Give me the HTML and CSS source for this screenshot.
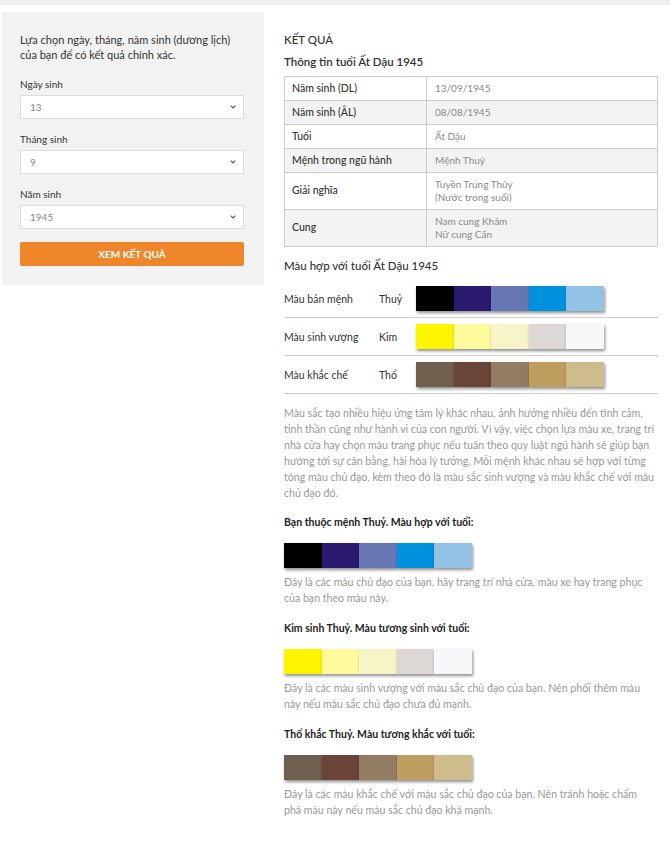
FILE: index.html
```html
<!DOCTYPE html>
<html lang="vi">
<head>
<meta charset="utf-8">
<title>Màu hợp tuổi</title>
<link rel="stylesheet" href="styles.css">
</head>
<body>
<div class="topbar"></div>
<div class="page">
  <aside class="sidebar">
    <p class="intro">Lựa chọn ngày, tháng, năm sinh (dương lịch) của bạn để có kết quả chính xác.</p>
    <div class="field">
      <label class="field-label">Ngày sinh</label>
      <div class="select"><span>13</span><svg class="chev" viewBox="0 0 6 4" width="6" height="4"><path d="M0.7 0.7l2.3 2.3 2.3-2.3" fill="none" stroke="#555" stroke-width="1.1"/></svg></div>
    </div>
    <div class="field">
      <label class="field-label">Tháng sinh</label>
      <div class="select"><span>9</span><svg class="chev" viewBox="0 0 6 4" width="6" height="4"><path d="M0.7 0.7l2.3 2.3 2.3-2.3" fill="none" stroke="#555" stroke-width="1.1"/></svg></div>
    </div>
    <div class="field">
      <label class="field-label">Năm sinh</label>
      <div class="select"><span>1945</span><svg class="chev" viewBox="0 0 6 4" width="6" height="4"><path d="M0.7 0.7l2.3 2.3 2.3-2.3" fill="none" stroke="#555" stroke-width="1.1"/></svg></div>
    </div>
    <button class="btn">XEM KẾT QUẢ</button>
  </aside>
  <main class="main">
    <h1 class="title">KẾT QUẢ</h1>
    <h2 class="subtitle">Thông tin tuổi Ất Dậu 1945</h2>
    <table class="info">
      <tr><td class="k">Năm sinh (DL)</td><td class="v">13/09/1945</td></tr>
      <tr class="alt"><td class="k">Năm sinh (ÂL)</td><td class="v">08/08/1945</td></tr>
      <tr><td class="k">Tuổi</td><td class="v">Ất Dậu</td></tr>
      <tr class="alt"><td class="k">Mệnh trong ngũ hành</td><td class="v">Mệnh Thuỷ</td></tr>
      <tr class="tall"><td class="k">Giải nghĩa</td><td class="v">Tuyền Trung Thủy<br>(Nước trong suối)</td></tr>
      <tr class="alt tall"><td class="k">Cung</td><td class="v">Nam cung Khảm<br>Nữ cung Cấn</td></tr>
    </table>
    <h2 class="subtitle sec">Màu hợp với tuổi Ất Dậu 1945</h2>
    <div class="crow">
      <span class="clabel">Màu bản mệnh</span><span class="celem">Thuỷ</span>
      <div class="strip"><i style="background:#000000"></i><i style="background:#2b1a6f"></i><i style="background:#6677b3"></i><i style="background:#0091df"></i><i style="background:#92c3e7"></i></div>
    </div>
    <div class="crow">
      <span class="clabel">Màu sinh vượng</span><span class="celem">Kim</span>
      <div class="strip"><i style="background:#fff500"></i><i style="background:#fffa9c"></i><i style="background:#f6f5c8"></i><i style="background:#ddd8d5"></i><i style="background:#f8f8fa"></i></div>
    </div>
    <div class="crow">
      <span class="clabel">Màu khắc chế</span><span class="celem">Thổ</span>
      <div class="strip"><i style="background:#6e5f4e"></i><i style="background:#6a4439"></i><i style="background:#937d62"></i><i style="background:#bf9d5e"></i><i style="background:#cfbc8d"></i></div>
    </div>
    <p class="para">Màu sắc tạo nhiều hiệu ứng tâm lý khác nhau, ảnh hưởng nhiều đến tình cảm, tinh thần cũng như hành vi của con người. Vì vậy, việc chọn lựa màu xe, trang trí nhà cửa hay chọn màu trang phục nếu tuân theo quy luật ngũ hành sẽ giúp bạn hướng tới sự cân bằng, hài hòa lý tưởng. Mỗi mệnh khác nhau sẽ hợp với từng tông màu chủ đạo, kèm theo đó là màu sắc sinh vượng và màu khắc chế với màu chủ đạo đó.</p>

    <h3 class="h3">Bạn thuộc mệnh Thuỷ. Màu hợp với tuổi:</h3>
    <div class="strip block"><i style="background:#000000"></i><i style="background:#2b1a6f"></i><i style="background:#6677b3"></i><i style="background:#0091df"></i><i style="background:#92c3e7"></i></div>
    <p class="note">Đây là các màu chủ đạo của bạn, hãy trang trí nhà cửa, màu xe hay trang phục của bạn theo màu này.</p>

    <h3 class="h3">Kim sinh Thuỷ. Màu tương sinh với tuổi:</h3>
    <div class="strip block"><i style="background:#fff500"></i><i style="background:#fffa9c"></i><i style="background:#f6f5c8"></i><i style="background:#ddd8d5"></i><i style="background:#f8f8fa"></i></div>
    <p class="note">Đây là các màu sinh vượng với màu sắc chủ đạo của bạn. Nên phối thêm màu này nếu màu sắc chủ đạo chưa đủ mạnh.</p>

    <h3 class="h3">Thổ khắc Thuỷ. Màu tương khắc với tuổi:</h3>
    <div class="strip block"><i style="background:#6e5f4e"></i><i style="background:#6a4439"></i><i style="background:#937d62"></i><i style="background:#bf9d5e"></i><i style="background:#cfbc8d"></i></div>
    <p class="note">Đây là các màu khắc chế với màu sắc chủ đạo của bạn. Nên tránh hoặc chấm phá màu này nếu màu sắc chủ đạo khá mạnh.</p>
  </main>
</div>
</body>
</html>
```

FILE: styles.css
```css
* { box-sizing: border-box; }
html, body { margin: 0; padding: 0; background: #fff; }
body {
  font-family: "Lato", "Noto Sans", sans-serif;
  color: #333;
  font-size: 11px;
}
.topbar { height: 5px; background: #f0f0f0; }
.page {
  display: flex;
  align-items: flex-start;
  gap: 20px;
  padding: 7px 12px 0 2px;
}
.sidebar {
  flex: none;
  width: 262px;
  background: #f2f2f2;
  padding: 20px 20px 19px 18px;
}
.intro {
  margin: 0 0 15px;
  font-size: 11px;
  line-height: 15px;
  color: #333;
}
.field { margin-bottom: 13px; }
.field-label {
  display: block;
  font-size: 10px;
  line-height: 14px;
  color: #333;
  margin-bottom: 4px;
}
.select {
  height: 24px;
  background: #fff;
  border: 1px solid #dcdcdc;
  display: flex;
  align-items: center;
  justify-content: space-between;
  padding: 0 7px 0 9px;
  color: #888;
  font-size: 10px;
}
.btn {
  display: block;
  width: 100%;
  height: 24px;
  border: 0;
  border-radius: 2px;
  background: #f0862a;
  color: #fff;
  font-family: inherit;
  font-weight: 700;
  font-size: 10px;
  padding: 0;
}
.main { flex: 1; padding-top: 20px; }
.title {
  margin: 0;
  font-size: 11.5px;
  line-height: 16px;
  font-weight: 500;
  color: #333;
}
.subtitle {
  margin: 6px 0 6px;
  font-size: 11.5px;
  line-height: 16px;
  font-weight: 600;
  color: #333;
}
.subtitle.sec { margin: 11px 0 6px; font-weight: 500; }
.info {
  width: 100%;
  border-collapse: collapse;
  font-size: 10.5px;
}
.info td {
  border: 1px solid #ccc;
  height: 24px;
  padding: 0 8px;
  line-height: 13.5px;
}
.info .tall td { height: 37px; }
.info .alt td { background: #f3f3f3; }
.info .k { width: 142px; color: #333; font-weight: 500; padding-left: 7px; }
.info .v { color: #8a8a8a; font-size: 10px; }
.crow {
  display: flex;
  align-items: center;
  padding: 6px 0;
  border-bottom: 1px solid #ccc;
  font-size: 10.5px;
}
.clabel { width: 95px; flex: none; }
.celem { width: 37px; flex: none; }
.strip { display: flex; height: 25px; }
.strip i {
  display: block;
  width: 37.6px;
  height: 100%;
  box-shadow: 1px 2px 3px rgba(0,0,0,0.45);
}
.strip.block { width: 188px; margin: 13px 0 6px; }
.para {
  margin: 11px 0 0;
  font-size: 10.6px;
  line-height: 16px;
  color: #999;
}
.h3 {
  margin: 13px 0 0;
  font-size: 10.5px;
  line-height: 16px;
  font-weight: 700;
  color: #222;
}
.note {
  margin: 0 0 14px;
  padding-right: 4px;
  font-size: 10.6px;
  line-height: 16px;
  color: #999;
}
```
